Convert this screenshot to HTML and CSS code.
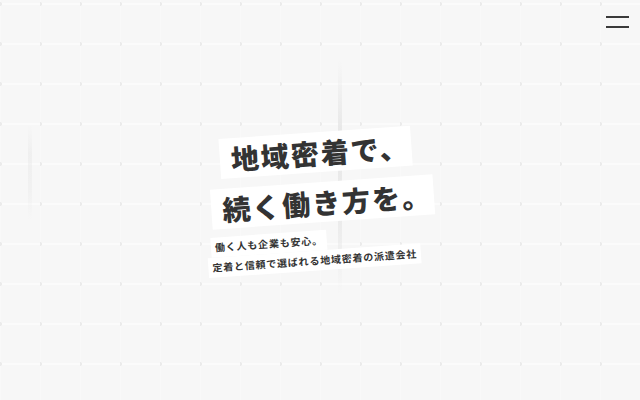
FILE: index.html
```html
<!DOCTYPE html>
<html lang="ja">
<head>
<meta charset="utf-8">
<title>地域密着で、続く働き方を。</title>
<link rel="stylesheet" href="styles.css">
</head>
<body>
<div class="page">
  <span class="streak streak-a"></span>
  <span class="streak streak-b"></span>
  <header class="header">
    <button class="menu" aria-label="menu">
      <span class="menu-line"></span>
      <span class="menu-line"></span>
    </button>
  </header>
  <main class="hero">
    <div class="copy">
      <h1 class="title">
        <span class="title-line first">地域密着で、</span>
        <span class="title-line second">続く働き方を。</span>
      </h1>
      <p class="lead">
        <span class="lead-line first">働く人も企業も安心。</span>
        <span class="lead-line second">定着と信頼で選ばれる地域密着の派遣会社</span>
      </p>
    </div>
  </main>
</div>
</body>
</html>
```
FILE: styles.css
```css
html, body {
  margin: 0;
  padding: 0;
}
body {
  font-family: "Noto Sans CJK JP", "Noto Sans", sans-serif;
  color: #333;
}
.page {
  position: relative;
  width: 640px;
  height: 400px;
  overflow: hidden;
  background-color: #f7f7f7;
  background-image:
    radial-gradient(circle at 0px 4px, #ebebeb 0 1.8px, transparent 2.3px),
    linear-gradient(to bottom, transparent 3px, #fbfbfb 3px, #fbfbfb 5px, transparent 5px),
    linear-gradient(to right, transparent 0px, #f9f9f9 0px, #f9f9f9 1px, transparent 1px);
  background-size: 40px 40px, 40px 40px, 40px 40px;
  background-position: 0 0, 0 0, 0 0;
  display: flex;
  flex-direction: column;
}
.streak {
  position: absolute;
  width: 4px;
  border-radius: 2px;
  background: linear-gradient(to bottom, rgba(228,228,228,0), rgba(228,228,228,0.8) 30%, rgba(228,228,228,0.6) 70%, rgba(228,228,228,0));
}
.streak-a {
  left: 338px;
  top: 60px;
  height: 235px;
}
.streak-b {
  left: 28px;
  top: 125px;
  height: 95px;
  opacity: 0.5;
}
.header {
  display: flex;
  justify-content: flex-end;
  padding: 16px 11px 0 0;
  position: relative;
  z-index: 2;
}
.menu {
  display: flex;
  flex-direction: column;
  gap: 8.5px;
  width: 23px;
  padding: 0;
  border: 0;
  background: transparent;
}
.menu-line {
  display: block;
  width: 23px;
  height: 1.5px;
  background: #3a3a3a;
}
.hero {
  flex: 1;
  display: flex;
  justify-content: center;
  align-items: flex-start;
  padding-top: 104px;
  position: relative;
  z-index: 1;
}
.copy {
  display: flex;
  flex-direction: column;
  align-items: flex-start;
  transform: rotate(-4deg);
  margin-left: 6px;
}
.title {
  margin: 0;
  display: flex;
  flex-direction: column;
  align-items: flex-start;
  gap: 10px;
  font-size: 28px;
  font-weight: 900;
  letter-spacing: 2px;
  line-height: 40px;
}
.title-line {
  display: block;
  background: #fff;
  padding: 0 2px 0 11px;
}
.title-line.first {
  margin-left: 12px;
}
.lead {
  margin: 8px 0 0 -7px;
  display: flex;
  flex-direction: column;
  align-items: flex-start;
  font-size: 10px;
  font-weight: 700;
  letter-spacing: 0.8px;
  line-height: 20px;
}
.lead-line {
  display: block;
  background: #fff;
  padding: 0 4px 0 4px;
}
.lead-line.first {
  margin-left: 4px;
}
```
